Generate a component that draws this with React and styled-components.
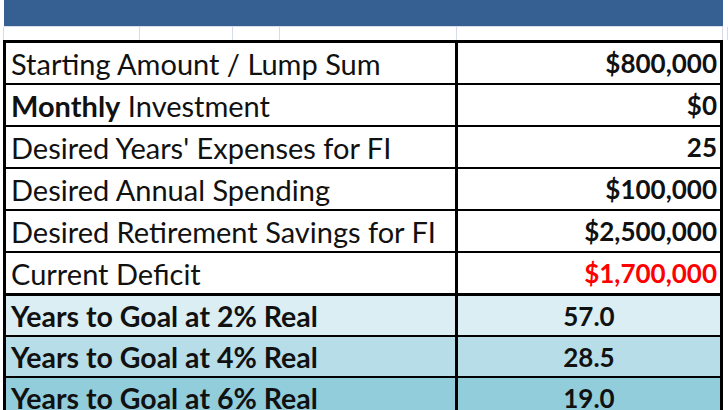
import React from "react";
import styled, { createGlobalStyle } from "styled-components";

const Global = createGlobalStyle`
  html, body { margin: 0; padding: 0; background: #fff; }
  body { font-family: Lato, "Liberation Sans", sans-serif; }
`;

const Page = styled.div`
  width: 728px;
  height: 410px;
  overflow: hidden;
  background: #fff;
`;

const HeaderBand = styled.div`
  margin-left: 4px;
  width: 719px;
  height: 26px;
  background: #376092;
  border-bottom: 1px solid #d6dde8;
`;

const GridStrip = styled.div`
  display: grid;
  grid-template-columns: 4px 136px 93px 47px 177px 266px 1fr;
  height: 13px;
`;

const GridCell = styled.div`
  border-right: 1px solid #d6dde8;
`;

const Table = styled.div`
  margin-left: 3px;
  width: 714px;
  border: 3px solid #000;
  border-bottom: none;
`;

const toneBg = {
  white: "#ffffff",
  light: "#daeef3",
  mid: "#b7dee8",
  deep: "#92cddc",
};

const Row = styled.div`
  display: grid;
  grid-template-columns: 452px 1fr;
  height: ${(p) => p.$h || 40}px;
  background: ${(p) => toneBg[p.$tone || "white"]};
  border-bottom: ${(p) => p.$rule || 2}px solid #000;
`;

const Label = styled.div`
  display: flex;
  align-items: center;
  padding-left: 5px;
  border-right: 3px solid #000;
  font-size: ${(p) => (p.$bold ? 28.5 : 29)}px;
  font-weight: ${(p) => (p.$bold ? 700 : 400)};
  color: #111;
  white-space: nowrap;
  overflow: hidden;
`;

const LabelText = styled.span``;

const Strong = styled.b`
  font-weight: 700;
`;

const Value = styled.div`
  display: flex;
  align-items: center;
  justify-content: ${(p) => (p.$center ? "center" : "flex-end")};
  padding-right: 3px;
  padding-left: ${(p) => (p.$center ? "3px" : "0")};
  font-size: 26px;
  font-weight: 700;
  color: ${(p) => (p.$red ? "#ff0000" : "#111")};
  white-space: nowrap;
`;

const inputs = [
  { label: "Starting Amount / Lump Sum", value: "$800,000" },
  { label: <><Strong>Monthly</Strong> Investment</>, value: "$0" },
  { label: "Desired Years' Expenses for FI", value: "25" },
  { label: "Desired Annual Spending", value: "$100,000" },
  { label: "Desired Retirement Savings for FI", value: "$2,500,000" },
  { label: "Current Deficit", value: "$1,700,000", red: true, rule: 3 },
];

const goals = [
  { label: "Years to Goal at 2% Real", value: "57.0", tone: "light" },
  { label: "Years to Goal at 4% Real", value: "28.5", tone: "mid" },
  { label: "Years to Goal at 6% Real", value: "19.0", tone: "deep" },
];

export default function App() {
  return (
    <Page>
      <Global />
      <HeaderBand />
      <GridStrip>
        {Array.from({ length: 7 }).map((_, i) => (
          <GridCell key={i} />
        ))}
      </GridStrip>
      <Table>
        {inputs.map((r, i) => (
          <Row key={i} $rule={r.rule}>
            <Label>
              <LabelText>{r.label}</LabelText>
            </Label>
            <Value $red={r.red}>{r.value}</Value>
          </Row>
        ))}
        {goals.map((r, i) => (
          <Row key={i} $tone={r.tone} $h={39}>
            <Label $bold>
              <LabelText>{r.label}</LabelText>
            </Label>
            <Value $center>{r.value}</Value>
          </Row>
        ))}
      </Table>
    </Page>
  );
}
